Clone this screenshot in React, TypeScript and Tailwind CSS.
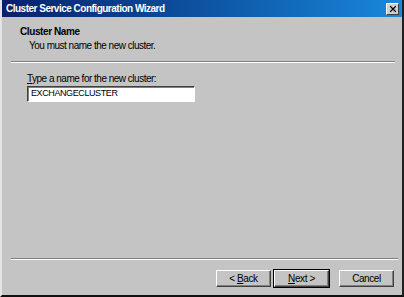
import { X } from 'lucide-react'

const font = { fontFamily: '"Liberation Sans", Arial, sans-serif' }

function WizardButton({ label, mnemonic, isDefault }: { label: string; mnemonic?: string; isDefault?: boolean }) {
  // Win2k style beveled push button; the default one gets an extra black frame
  const parts = mnemonic ? label.split(mnemonic) : [label]
  return (
    <div className={isDefault ? 'border border-black' : 'border border-transparent'}>
      <button
        type="button"
        className="flex h-[17px] w-[55px] items-center justify-center border-t border-l border-b border-r border-t-white border-l-white border-b-[#404040] border-r-[#404040] bg-[#c4c4c4] text-[10px] tracking-[-0.4px] text-black shadow-[inset_-1px_-1px_0_#808080]"
      >
        {mnemonic ? (
          <span>
            {parts[0]}
            <span className="underline">{mnemonic}</span>
            {parts[1]}
          </span>
        ) : (
          label
        )}
      </button>
    </div>
  )
}

function Separator() {
  return (
    <div className="flex flex-col">
      <div className="h-px bg-[#808080]" />
      <div className="h-px bg-white" />
    </div>
  )
}

export default function App() {
  return (
    <div
      className="flex h-[297px] w-[404px] flex-col border-l-2 border-r-2 border-b-2 border-l-[#e4e4e4] border-r-[#202020] border-b-[#101010] bg-[#c4c4c4] text-black"
      style={font}
    >
      <div className="flex h-[17px] items-center justify-between bg-gradient-to-r from-[#08206a] to-[#1a88dc] pl-[4px] pr-[3px]">
        <span className="text-[10px] font-bold leading-none tracking-[-0.5px] text-white">
          Cluster Service Configuration Wizard
        </span>
        <div className="flex h-[12px] w-[13px] items-center justify-center border border-t-white border-l-white border-b-[#404040] border-r-[#404040] bg-[#d0d0d0]">
          <X size={10} strokeWidth={3} color="#000" />
        </div>
      </div>

      <div className="flex flex-1 flex-col pt-[9px]">
        <div className="pl-[18px] text-[10px] font-bold leading-[12px] tracking-[-0.4px]">Cluster Name</div>
        <div className="mt-[2px] pl-[27px] text-[10px] leading-[12px] tracking-[-0.5px]">
          You must name the new cluster.
        </div>

        <div className="mt-[9px] pl-[9px] pr-[7px]">
          <Separator />
        </div>

        <div className="mt-[10px] pl-[25px]">
          <div className="text-[10px] leading-[12px] tracking-[-0.5px]">
            <span className="underline">T</span>ype a name for the new cluster:
          </div>
          <div className="mt-[1px] flex h-[16px] w-[168px] items-center border border-t-[#404040] border-l-[#404040] border-b-white border-r-white bg-white pl-[3px] text-[9px] tracking-[-0.4px] shadow-[inset_1px_1px_0_#808080]">
            EXCHANGECLUSTER
          </div>
        </div>

        <div className="flex-1" />

        <div className="pl-[9px] pr-[4px]">
          <Separator />
        </div>

        <div className="mb-[7px] mt-[9px] flex justify-end gap-[1px] pr-[7px]">
          <WizardButton label="< Back" mnemonic="B" />
          <WizardButton label="Next >" mnemonic="N" isDefault />
          <div className="w-[6px]" />
          <WizardButton label="Cancel" />
        </div>
      </div>
    </div>
  )
}
